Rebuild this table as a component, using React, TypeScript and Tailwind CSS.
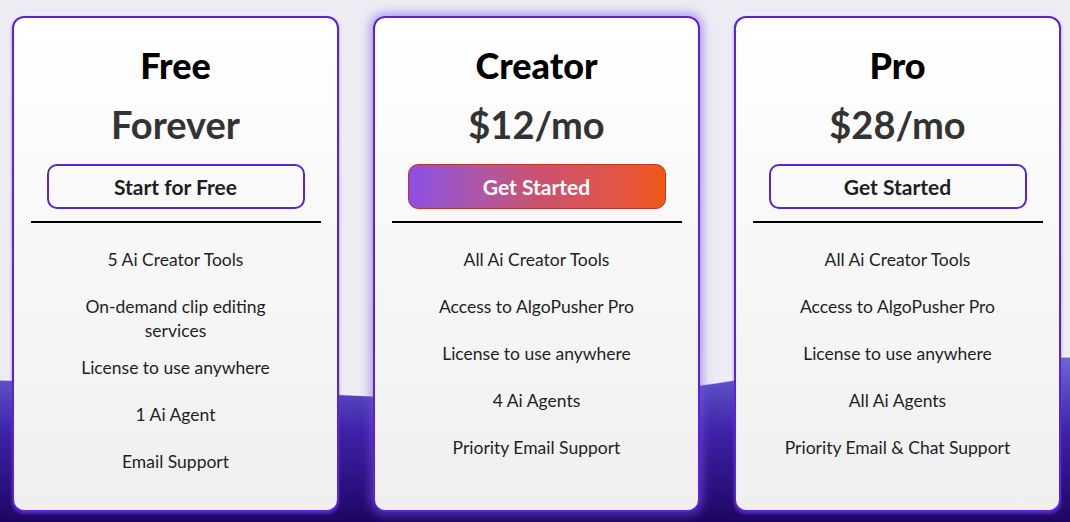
import React from "react";

type Plan = {
  name: string;
  price: string;
  cta: string;
  featured?: boolean;
  features: string[];
};

const plans: Plan[] = [
  {
    name: "Free",
    price: "Forever",
    cta: "Start for Free",
    features: ["5 Ai Creator Tools", "On-demand clip editing\nservices", "License to use anywhere", "1 Ai Agent", "Email Support"],
  },
  {
    name: "Creator",
    price: "$12/mo",
    cta: "Get Started",
    featured: true,
    features: ["All Ai Creator Tools", "Access to AlgoPusher Pro", "License to use anywhere", "4 Ai Agents", "Priority Email Support"],
  },
  {
    name: "Pro",
    price: "$28/mo",
    cta: "Get Started",
    features: ["All Ai Creator Tools", "Access to AlgoPusher Pro", "License to use anywhere", "All Ai Agents", "Priority Email & Chat Support"],
  },
];

function Wave() {
  return (
    <svg className="absolute inset-0 w-full h-full" viewBox="0 0 1070 522" preserveAspectRatio="none">
      <defs>
        <linearGradient id="wave" x1="0" y1="0" x2="0" y2="1">
          <stop offset="0" stopColor="#6b68d2" />
          <stop offset="0.45" stopColor="#3e22a8" />
          <stop offset="1" stopColor="#1d0662" />
        </linearGradient>
      </defs>
      <path
        d="M0 380 C 200 385, 330 395, 400 397 C 560 399, 690 391, 760 375 C 900 359, 1000 357, 1070 357 L1070 522 L0 522 Z"
        fill="url(#wave)"
      />
      <path
        d="M0 380 C 200 385, 330 395, 400 397 C 560 399, 690 391, 760 375 C 900 359, 1000 357, 1070 357"
        fill="none"
        stroke="#ffffff"
        strokeOpacity="0.6"
        strokeWidth="1.5"
      />
    </svg>
  );
}

function PlanCard({ plan }: { plan: Plan }) {
  return (
    <div
      className={`w-[327px] h-[496px] rounded-[12px] border-2 border-[#5a23d6] bg-gradient-to-b from-[#ffffff] to-[#efeff0] flex flex-col items-center ${
        plan.featured ? "shadow-[0_0_10px_3px_rgba(130,80,240,0.55)]" : "shadow-[0_2px_3px_rgba(110,60,230,0.6)]"
      }`}
    >
      <h3 className="mt-[27px] text-[36px] leading-[40px] font-black text-black">{plan.name}</h3>
      <div className="mt-[16px] text-[38px] leading-[46px] font-bold text-[#333333]">{plan.price}</div>
      <button
        className={`mt-[17px] w-[258px] h-[45px] rounded-[10px] text-[21px] font-bold ${
          plan.featured
            ? "border border-[#c5321f] bg-gradient-to-r from-[#8c4de4] via-[#c9516f] to-[#f2560f] text-white"
            : "border-2 border-[#5a23d6] bg-transparent text-[#1e1e1e]"
        }`}
      >
        {plan.cta}
      </button>
      <div className="mt-[12px] w-[290px] h-[2px] bg-black" />
      <ul className="mt-[13px] w-full flex flex-col items-center text-[17.5px] leading-6 text-[#1f1f1f]">
        {plan.features.map((f, i) => (
          <li
            key={i}
            className={`w-full px-4 text-center whitespace-pre-line ${f.includes("\n") ? "pt-[11.5px] pb-[2px]" : "py-[11.5px]"}`}
          >
            {f}
          </li>
        ))}
      </ul>
    </div>
  );
}

export default function App() {
  return (
    <div className="relative w-[1070px] h-[522px] overflow-hidden bg-[#ececf2]" style={{ fontFamily: "Lato, 'Open Sans', sans-serif" }}>
      <Wave />
      <div className="relative flex gap-[34px] pl-[12px] pt-[16px]">
        {plans.map((p) => (
          <PlanCard key={p.name} plan={p} />
        ))}
      </div>
    </div>
  );
}
